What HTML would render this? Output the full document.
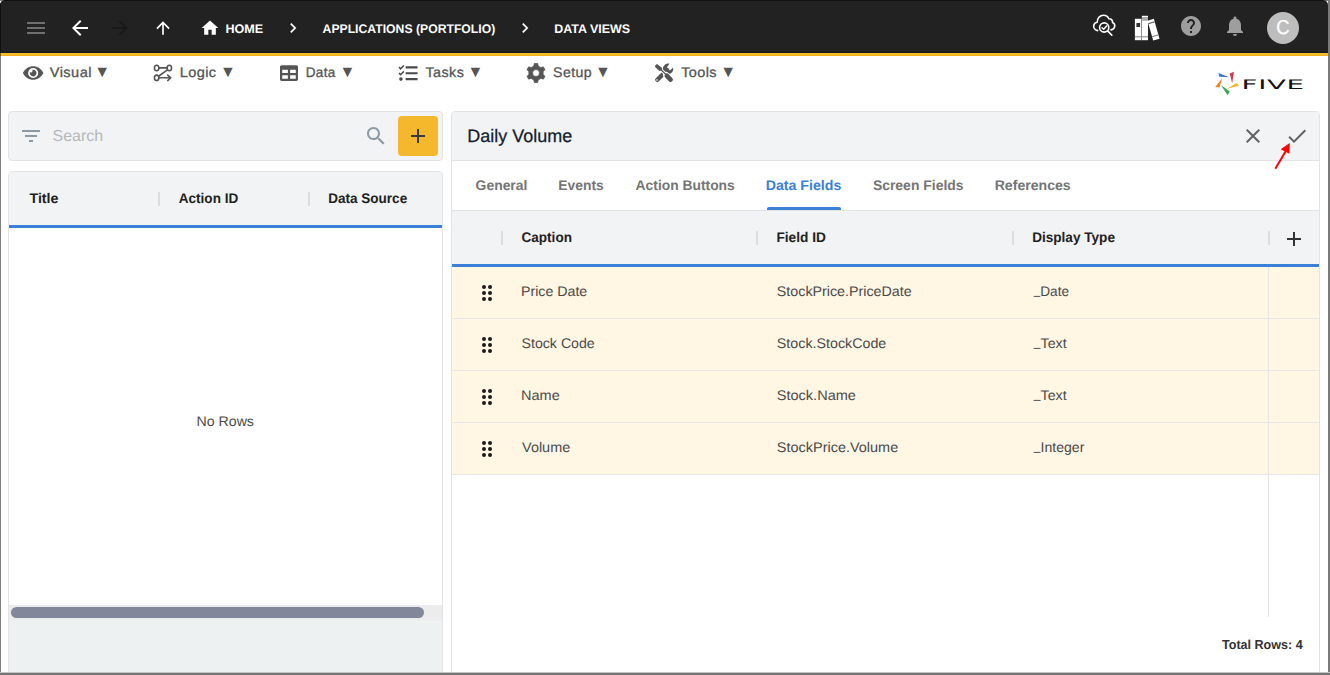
<!DOCTYPE html>
<html lang="en">
<head>
<meta charset="utf-8">
<title>Five - Data Views</title>
<style>
*{box-sizing:border-box;margin:0;padding:0}
html,body{width:1330px;height:675px;overflow:hidden;background:#fff}
body{font-family:"Liberation Sans",sans-serif;color:#212121;position:relative;text-rendering:geometricPrecision}
.abs{position:absolute}
.t{position:absolute;white-space:nowrap;line-height:1;transform-origin:0 0}
svg{position:absolute;display:block;overflow:visible}
#frame{position:absolute;left:0;top:0;width:1330px;height:675px;overflow:hidden;background:#fff}
#topbar{left:0;top:0;width:1328px;height:53px;background:#222;border-radius:5px 5px 0 0}
#topline{left:0;top:52px;width:1328px;height:4px;background:linear-gradient(#141822 0,#141822 1px,#ffc32d 1px,#ffc32d 2px,#f7b828 2px,#f7b828 3px,#f5b21b 3px)}
.crumb{color:#fff;font-weight:700;font-size:12.5px}
.menu{color:#555;font-size:14px;font-weight:400;letter-spacing:.4px;-webkit-text-stroke:.3px #555}
.tri{color:#555;font-size:16px}
.panel{background:#f2f3f5;border:1px solid #e2e3e5}
.th{font-weight:700;font-size:14px;color:#212121}
.sep{position:absolute;width:2px;height:14px;background:#dcdddf}
.blue{position:absolute;height:3px;background:#3a80d7}
.row{position:absolute;left:452px;width:867px;height:52px;background:#fff6e4;border-bottom:1px solid #e6e6e6}
.td{font-size:14px;color:#4a4a4a}
.us{display:inline-block;position:relative;top:-1.900px;width:6.700px;transform:scaleX(.84);transform-origin:0 0}
.tab{font-size:14px;font-weight:700;color:#757575}
/*FIT*/
#c1{transform:translateX(-0.56px) scaleX(1.0069)}
#c2{transform:translateX(-0.44px) scaleX(0.9767)}
#c3{transform:translateX(-0.75px) scaleX(0.9960)}
#m1{transform:translateX(-0.20px) scaleX(1.0436)}
#m2{transform:translateX(-1.34px) scaleX(1.0400)}
#m3{transform:translateX(-1.37px) scaleX(0.9667)}
#m4{transform:translateX(-0.46px) scaleX(1.0231)}
#m5{transform:translateX(-0.90px) scaleX(1.0094)}
#m6{transform:translateX(0.14px) scaleX(1.0311)}
#srch{transform:translateX(-0.45px) scaleX(0.9980)}
#h1{transform:translateX(0.45px) scaleX(1.0162)}
#h2{transform:translateX(-0.18px) scaleX(0.9660)}
#h3{transform:translateX(-0.66px) scaleX(0.9645)}
#norows{transform:translateX(-2.61px) scaleX(1.0109)}
#ttl{transform:translateX(-0.75px) scaleX(0.9995)}
#tb1{transform:translateX(-0.40px) scaleX(0.9931)}
#tb2{transform:translateX(-0.79px) scaleX(0.9921)}
#tb3{transform:translateX(-0.39px) scaleX(0.9884)}
#tb4{transform:translateX(-1.31px) scaleX(1.0123)}
#tb5{transform:translateX(-0.10px) scaleX(0.9956)}
#tb6{transform:translateX(-0.31px) scaleX(1.0068)}
#g1{transform:translateX(-0.48px) scaleX(0.9675)}
#g2{transform:translateX(-0.58px) scaleX(0.9776)}
#g3{transform:translateX(-0.87px) scaleX(0.9707)}
#r1a{transform:translateX(-0.97px) scaleX(1.0126)}
#r2a{transform:translateX(-0.46px) scaleX(1.0113)}
#r3a{transform:translateX(-1.00px) scaleX(1.0366)}
#r4a{transform:translateX(0.04px) scaleX(1.0317)}
#r1b{transform:translateX(-0.16px) scaleX(1.0191)}
#r2b{transform:translateX(-0.16px) scaleX(1.0189)}
#r3b{transform:translateX(-0.18px) scaleX(1.0368)}
#r4b{transform:translateX(-0.17px) scaleX(1.0328)}
#r1c{transform:translateX(0.74px) scaleX(0.9722)}
#r2c{transform:translateX(0.75px) scaleX(1.0185)}
#r3c{transform:translateX(0.75px) scaleX(1.0185)}
#r4c{transform:translateX(0.75px) scaleX(1.0070)}
#tot{transform:translateX(6.51px) scaleX(0.9665)}
#five{transform:translateX(-2.43px) scaleX(2.1018)}
/*ENDFIT*/
</style>
</head>
<body>
<div id="frame">
  <!-- top bar -->
  <div class="abs" style="left:0;top:0;width:1330px;height:1px;background:#7a7a7a"></div>
  <div class="abs" id="topbar"></div>
  <div class="abs" style="left:4px;top:0;width:1319px;height:1px;background:#111"></div>
  <div class="abs" id="topline"></div>

  <!-- hamburger -->
  <svg style="left:24px;top:16px" width="24" height="24" viewBox="0 0 24 24"><path fill="#6f6f6f" d="M3 18h18v-2H3v2zm0-5h18v-2H3v2zm0-7v2h18V6H3z"/></svg>
  <!-- back -->
  <svg style="left:68px;top:16px" width="24" height="24" viewBox="0 0 24 24"><path fill="#fff" d="M20 11H7.83l5.59-5.59L12 4l-8 8 8 8 1.41-1.41L7.83 13H20v-2z"/></svg>
  <!-- forward (disabled) -->
  <svg style="left:108px;top:16px" width="24" height="24" viewBox="0 0 24 24"><path fill="#191919" d="M12 4l-1.41 1.41L16.17 11H4v2h12.17l-5.58 5.59L12 20l8-8z"/></svg>
  <!-- up -->
  <svg style="left:153px;top:18px" width="20" height="20" viewBox="0 0 24 24"><path fill="#fff" d="M4 12l1.41 1.41L11 7.83V20h2V7.83l5.58 5.59L20 12l-8-8-8 8z"/></svg>
  <!-- home -->
  <svg style="left:200px;top:18px" width="20" height="20" viewBox="0 0 24 24"><path fill="#fff" d="M10 20v-6h4v6h5v-8h3L12 3 2 12h3v8z"/></svg>
  <div class="t crumb" id="c1" style="left:226px;top:22.600px">HOME</div>
  <svg style="left:283px;top:18px" width="20" height="20" viewBox="0 0 24 24"><path fill="#fff" d="M10 6L8.59 7.41 13.17 12l-4.58 4.59L10 18l6-6z"/></svg>
  <div class="t crumb" id="c2" style="left:323px;top:22.600px">APPLICATIONS (PORTFOLIO)</div>
  <svg style="left:515px;top:18px" width="20" height="20" viewBox="0 0 24 24"><path fill="#fff" d="M10 6L8.59 7.41 13.17 12l-4.58 4.59L10 18l6-6z"/></svg>
  <div class="t crumb" id="c3" style="left:555px;top:22.600px">DATA VIEWS</div>

  <!-- right icons -->
  <svg id="cloud" style="left:1091px;top:12px" width="26" height="26" viewBox="0 0 26 26" fill="none" stroke="#fff" stroke-width="1.6" stroke-linecap="round" stroke-linejoin="round">
    <path d="M6.6 18.6C3.6 18 2.4 15.600 2.700 13.700C3 11.800 4.400 10.500 6.200 10.300C6.200 6.500 8.800 3.200 12.400 3.200C15 3.200 17 4.500 17.800 6.800C20.400 6.600 21.800 8.600 21.600 10.600C23.400 11.400 24 13.200 23.600 14.900C23.200 16.500 21.900 17.600 20 17.900"/>
    <circle cx="13.200" cy="15.500" r="4.600"/>
    <path d="M16.600 18.900L20.800 23.100"/>
    <path d="M11 15.700L12.700 17.300L15.600 13.900" stroke-width="1.500"/>
  </svg>
  <svg id="books" style="left:1134px;top:15px" width="26" height="26" viewBox="0 0 26 26">
    <rect x="0.900" y="3.800" width="6.400" height="21.400" fill="#fff"/>
    <rect x="2.400" y="8" width="3.700" height="4" fill="#333"/>
    <rect x="0.900" y="20.900" width="6.400" height="1.600" fill="#aaa"/>
    <rect x="7.900" y="0.800" width="6.100" height="24.400" fill="#fff"/>
    <rect x="7.900" y="2" width="6.100" height="3.800" fill="#aaa"/>
    <rect x="7.900" y="20.900" width="6.100" height="1.600" fill="#aaa"/>
    <rect x="7.300" y="3.800" width="0.700" height="21.400" fill="#999"/>
    <g transform="rotate(-16 19.500 15)">
      <rect x="16.300" y="4.400" width="6.600" height="20.600" fill="#fff"/>
      <rect x="16.300" y="7" width="6.600" height="1" fill="#555"/>
      <rect x="16.300" y="20.500" width="6.600" height="1.200" fill="#888"/>
    </g>
  </svg>
  <!-- help -->
  <svg style="left:1179px;top:14px" width="24" height="24" viewBox="0 0 24 24"><path fill="#9e9e9e" d="M12 2C6.480 2 2 6.480 2 12s4.480 10 10 10 10-4.480 10-10S17.520 2 12 2zm1 17h-2v-2h2v2zm2.070-7.750l-.9.920C13.450 12.900 13 13.500 13 15h-2v-.5c0-1.100.45-2.100 1.170-2.830l1.240-1.260c.37-.36.590-.86.590-1.410 0-1.100-.9-2-2-2s-2 .9-2 2H8c0-2.210 1.790-4 4-4s4 1.790 4 4c0 .88-.36 1.680-.93 2.250z"/></svg>
  <!-- bell -->
  <svg style="left:1223px;top:14px" width="24" height="24" viewBox="0 0 24 24"><path fill="#9e9e9e" d="M12 22c1.100 0 2-.9 2-2h-4c0 1.100.89 2 2 2zm6-6v-5c0-3.070-1.640-5.640-4.500-6.320V4c0-.83-.67-1.500-1.500-1.500s-1.500.67-1.500 1.500v.68C7.630 5.360 6 7.920 6 11v5l-2 2v1h16v-1l-2-2z"/></svg>
  <!-- avatar -->
  <div class="abs" style="left:1267px;top:12px;width:32px;height:32px;border-radius:50%;background:#bdbdbd"></div>
  <div class="t" id="avc" style="left:1267px;top:18.200px;width:32px;text-align:center;color:#fff;font-size:20px;transform-origin:50% 50%;transform:scaleX(.92);-webkit-text-stroke:.3px #fff">C</div>

  <!-- menu row -->
  <div class="t menu" id="m1" style="left:50px;top:65px">Visual</div><div class="t tri" id="t1" style="left:94.3px;top:64.500px">▼</div>
  <div class="t menu" id="m2" style="left:181px;top:65px">Logic</div><div class="t tri" id="t2" style="left:219.9px;top:64.500px">▼</div>
  <div class="t menu" id="m3" style="left:307px;top:65px">Data</div><div class="t tri" id="t3" style="left:339.6px;top:64.500px">▼</div>
  <div class="t menu" id="m4" style="left:426px;top:65px">Tasks</div><div class="t tri" id="t4" style="left:467.5px;top:64.500px">▼</div>
  <div class="t menu" id="m5" style="left:554px;top:65px">Setup</div><div class="t tri" id="t5" style="left:594.9px;top:64.500px">▼</div>
  <div class="t menu" id="m6" style="left:681px;top:65px">Tools</div><div class="t tri" id="t6" style="left:720.3px;top:64.500px">▼</div>


  <!-- menu icons -->
  <svg id="i-eye" style="left:22.800px;top:63.900px" width="20.300" height="18.040" viewBox="0 0 576 512"><path fill="#555" d="M572.520 241.400C518.290 135.590 410.930 64 288 64S57.680 135.640 3.480 241.410a32.350 32.350 0 0 0 0 29.190C57.710 376.410 165.070 448 288 448s230.320-71.640 284.520-177.410a32.350 32.350 0 0 0 0-29.190zM288 400a144 144 0 1 1 144-144 143.930 143.930 0 0 1-144 144zm0-240a95.310 95.310 0 0 0-25.310 3.790 47.850 47.850 0 0 1-66.900 66.900A95.780 95.780 0 1 0 288 160z"/></svg>
  <svg id="i-logic" style="left:145px;top:58px" width="40" height="30" viewBox="0 0 900 675" fill="none" stroke="#555" stroke-width="36" stroke-linecap="round" stroke-linejoin="round">
    <ellipse cx="262" cy="225" rx="50" ry="62"/><ellipse cx="548" cy="225" rx="50" ry="62"/><ellipse cx="262" cy="447" rx="50" ry="62"/>
    <path d="M318 222H492M505 268L312 405M318 445H575M512 385L580 445L512 508"/>
  </svg>
  <svg id="i-table" style="left:280px;top:63.800px" width="18" height="18" viewBox="0 0 512 512"><path fill="#555" d="M464 32H48C21.490 32 0 53.490 0 80v352c0 26.510 21.490 48 48 48h416c26.510 0 48-21.490 48-48V80c0-26.510-21.490-48-48-48zM224 416H64v-96h160v96zm0-160H64v-96h160v96zm224 160H288v-96h160v96zm0-160H288v-96h160v96z"/></svg>
  <svg id="i-tasks" style="left:390px;top:58px" width="40" height="30" viewBox="0 0 900 675" fill="none" stroke="#4a4a4a" stroke-linecap="butt" stroke-linejoin="miter">
    <path d="M352 211H620M352 343H620M352 475H620" stroke-width="48"/>
    <path d="M203 205L238 243L312 168M203 338L238 376L312 301" stroke-width="34"/>
    <circle cx="246" cy="475" r="40" fill="#4a4a4a" stroke="none"/>
  </svg>
  <svg id="i-cog" style="left:526px;top:63px" width="20" height="20" viewBox="-10 -10 20 20"><path fill="#555" stroke="#555" stroke-width="0.800" stroke-linejoin="round" fill-rule="evenodd" d="M2.160 -6.970 L1.670 -9.460 L-1.670 -9.460 L-2.160 -6.970 L-4.960 -5.360 L-7.310 -6.130 L-8.990 -3.330 L-7.120 -1.620 L-7.120 1.620 L-8.990 3.330 L-7.310 6.130 L-4.960 5.360 L-2.160 6.970 L-1.670 9.460 L1.670 9.460 L2.160 6.970 L4.960 5.360 L7.310 6.130 L8.990 3.330 L7.120 1.620 L7.120 -1.620 L8.990 -3.330 L7.310 -6.130 L4.960 -5.360Z M3.500 0 A3.500 3.500 0 1 0 -3.500 0 A3.500 3.500 0 1 0 3.500 0Z"/></svg>
  <svg id="i-tools" style="left:644px;top:58px" width="40" height="30" viewBox="0 0 900 675">
    <path d="M575 132A118 118 0 1 0 655 215L590 275L528 262L518 200Z" fill="#555"/>
    <path d="M300 490L520 272" stroke="#555" stroke-width="100" stroke-linecap="round" fill="none"/>
    <g fill="none" stroke="#fff">
      <path d="M340 225L500 380" stroke-width="72"/>
      <path d="M500 385L598 485" stroke-width="140" stroke-linecap="round"/>
    </g>
    <path d="M250 168L292 135L402 218L408 268L345 292L252 200Z" fill="#555"/>
    <g fill="none" stroke="#555" stroke-linecap="round">
      <path d="M372 255L500 380" stroke-width="30"/>
      <path d="M515 400L598 485" stroke-width="104"/>
    </g>
    <circle cx="292" cy="495" r="20" fill="#c8c8c8"/>
  </svg>
  <!-- five logo -->
  <svg id="i-five" style="left:1200px;top:60px" width="120" height="45" viewBox="0 0 1330 499">
    <path d="M205 143L325 190L213 186Z" fill="#3b78d8"/>
    <path d="M376 130L356 258L330 150Z" fill="#dc3545"/>
    <path d="M402 254L432 285L303 320Z" fill="#f5b72b"/>
    <path d="M234 280L330 350L305 392Z" fill="#34a853"/>
    <path d="M246 203L216 306L168 300Z" fill="#f5822a"/>
  </svg>
  <div class="t" id="five" style="left:1244px;top:79.400px;font-family:'DejaVu Sans',sans-serif;font-weight:400;font-size:13.200px;color:#111;letter-spacing:.3px">FIVE</div>

  <!-- left search -->
  <div class="abs panel" style="left:8px;top:111px;width:435px;height:50px;border-radius:4px"></div>
  <svg style="left:19px;top:124px" width="24" height="24" viewBox="0 0 24 24"><path fill="#8d99a3" d="M10 18h4v-2h-4v2zM3 6v2h18V6H3zm3 7h12v-2H6v2z"/></svg>
  <div class="t" id="srch" style="left:53px;top:128.600px;font-size:16px;color:#b4b8bc">Search</div>
  <svg style="left:363.800px;top:124px" width="24" height="24" viewBox="0 0 24 24"><path fill="#8d99a3" d="M15.500 14h-.79l-.28-.27C15.410 12.590 16 11.110 16 9.500 16 5.910 13.090 3 9.500 3S3 5.910 3 9.500 5.910 16 9.500 16c1.610 0 3.090-.59 4.230-1.570l.27.280v.79l5 4.990L20.490 19l-4.990-5zm-6 0C7.010 14 5 11.990 5 9.500S7.010 5 9.500 5 14 7.010 14 9.500 11.990 14 9.500 14z"/></svg>
  <div class="abs" style="left:398px;top:116px;width:40px;height:40px;border-radius:4px;background:#f5b72b"></div>
  <svg style="left:406px;top:124px" width="24" height="24" viewBox="0 0 24 24"><path fill="#3a3a3a" d="M19 13h-6v6h-2v-6H5v-2h6V5h2v6h6v2z"/></svg>

  <!-- left table -->
  <div class="abs" style="left:8px;top:171px;width:435px;height:510px;border:1px solid #e2e3e5;border-radius:4px;background:#fff;overflow:hidden">
    <div class="abs" style="left:0;top:0;width:433px;height:54px;background:#f2f3f5"></div>
    <div class="abs" style="left:0;top:433px;width:433px;height:15px;background:#ececec"></div>
    <div class="abs" style="left:0;top:448px;width:433px;height:60px;background:#eef1f2"></div>
    <div class="abs" style="left:2px;top:435px;width:413px;height:11px;border-radius:5.500px;background:#828899"></div>
  </div>
  <div class="blue" style="left:9px;top:225px;width:433px"></div>
  <div class="t th" id="h1" style="left:29px;top:191px">Title</div>
  <div class="sep" style="left:158px;top:192px"></div>
  <div class="t th" id="h2" style="left:179px;top:191px">Action ID</div>
  <div class="sep" style="left:308px;top:192px"></div>
  <div class="t th" id="h3" style="left:329px;top:191px">Data Source</div>
  <div class="t" id="norows" style="left:9px;top:414px;width:433px;text-align:center;font-size:14px;color:#4a4a4a">No Rows</div>

  <!-- right panel -->
  <div class="abs" style="left:451px;top:111px;width:869px;height:570px;border:1px solid #e2e3e5;border-radius:4px;background:#fff;overflow:hidden">
    <div class="abs" style="left:0;top:0;width:867px;height:49px;background:#f2f3f5;border-bottom:1px solid #e2e3e5"></div>
    <div class="abs" style="left:0;top:98px;width:867px;height:55px;background:#f2f3f5;border-top:1px solid #e2e3e5"></div>
  </div>
  <div class="t" id="ttl" style="left:468px;top:127px;font-size:18px;color:#141c30;-webkit-text-stroke:.25px #141c30">Daily Volume</div>
  <svg style="left:1241px;top:124px" width="24" height="24" viewBox="0 0 24 24"><path fill="#626262" d="M19 6.410L17.590 5 12 10.590 6.410 5 5 6.410 10.590 12 5 17.590 6.410 19 12 13.410 17.590 19 19 17.590 13.410 12z"/></svg>
  <svg style="left:1285px;top:123.500px" width="24" height="24" viewBox="0 0 24 24"><path fill="#626262" d="M9 16.170L4.830 12l-1.420 1.410L9 19 21 7l-1.410-1.410z"/></svg>
  <!-- red arrow -->
  <svg id="i-arrow" style="left:1230px;top:115px" width="95" height="60" viewBox="0 0 1069 675"><path d="M510 605L630 402" stroke="#f00" stroke-width="22" fill="none"/><path d="M673 316L570 384L668 437Z" fill="#f00"/></svg>

  <!-- tabs -->
  <div class="t tab" id="tb1" style="left:476px;top:178.200px">General</div>
  <div class="t tab" id="tb2" style="left:559px;top:178.200px">Events</div>
  <div class="t tab" id="tb3" style="left:636px;top:178.200px">Action Buttons</div>
  <div class="t tab" id="tb4" style="left:767px;top:178.200px;color:#3a80d7">Data Fields</div>
  <div class="t tab" id="tb5" style="left:873px;top:178.200px">Screen Fields</div>
  <div class="t tab" id="tb6" style="left:995px;top:178.200px">References</div>
  <div class="abs" style="left:767px;top:207px;width:74px;height:3px;background:#3a80d7;border-radius:2px 2px 0 0"></div>

  <!-- right table header -->
  <div class="sep" style="left:501px;top:231px"></div>
  <div class="t th" id="g1" style="left:522px;top:230px">Caption</div>
  <div class="sep" style="left:756px;top:231px"></div>
  <div class="t th" id="g2" style="left:777px;top:230px">Field ID</div>
  <div class="sep" style="left:1012px;top:231px"></div>
  <div class="t th" id="g3" style="left:1033px;top:230px">Display Type</div>
  <div class="sep" style="left:1268px;top:231px"></div>
  <svg style="left:1282px;top:227px" width="24" height="24" viewBox="0 0 24 24"><path fill="#333" d="M19 13h-6v6h-2v-6H5v-2h6V5h2v6h6v2z"/></svg>
  <div class="blue" style="left:452px;top:264px;width:867px"></div>

  <!-- rows -->
  <div class="row" style="top:267px"></div>
  <div class="row" style="top:319px"></div>
  <div class="row" style="top:371px"></div>
  <div class="row" style="top:423px"></div>
  <div class="abs" style="left:1268px;top:267px;width:1px;height:350px;background:#e6e6e6"></div>

  <svg style="left:475px;top:281px" width="24" height="24" viewBox="0 0 24 24"><g fill="#1c1c1c"><circle cx="9" cy="6" r="2"/><circle cx="15" cy="6" r="2"/><circle cx="9" cy="12" r="2"/><circle cx="15" cy="12" r="2"/><circle cx="9" cy="18" r="2"/><circle cx="15" cy="18" r="2"/></g></svg>
  <svg style="left:475px;top:333px" width="24" height="24" viewBox="0 0 24 24"><g fill="#1c1c1c"><circle cx="9" cy="6" r="2"/><circle cx="15" cy="6" r="2"/><circle cx="9" cy="12" r="2"/><circle cx="15" cy="12" r="2"/><circle cx="9" cy="18" r="2"/><circle cx="15" cy="18" r="2"/></g></svg>
  <svg style="left:475px;top:385px" width="24" height="24" viewBox="0 0 24 24"><g fill="#1c1c1c"><circle cx="9" cy="6" r="2"/><circle cx="15" cy="6" r="2"/><circle cx="9" cy="12" r="2"/><circle cx="15" cy="12" r="2"/><circle cx="9" cy="18" r="2"/><circle cx="15" cy="18" r="2"/></g></svg>
  <svg style="left:475px;top:437px" width="24" height="24" viewBox="0 0 24 24"><g fill="#1c1c1c"><circle cx="9" cy="6" r="2"/><circle cx="15" cy="6" r="2"/><circle cx="9" cy="12" r="2"/><circle cx="15" cy="12" r="2"/><circle cx="9" cy="18" r="2"/><circle cx="15" cy="18" r="2"/></g></svg>
  <div class="t td" id="r1a" style="left:522px;top:284px">Price Date</div>
  <div class="t td" id="r1b" style="left:777px;top:284px">StockPrice.PriceDate</div>
  <div class="t td" id="r1c" style="left:1033px;top:284px"><span class="us">_</span>Date</div>
  <div class="t td" id="r2a" style="left:522px;top:336px">Stock Code</div>
  <div class="t td" id="r2b" style="left:777px;top:336px">Stock.StockCode</div>
  <div class="t td" id="r2c" style="left:1033px;top:336px"><span class="us">_</span>Text</div>
  <div class="t td" id="r3a" style="left:522px;top:388px">Name</div>
  <div class="t td" id="r3b" style="left:777px;top:388px">Stock.Name</div>
  <div class="t td" id="r3c" style="left:1033px;top:388px"><span class="us">_</span>Text</div>
  <div class="t td" id="r4a" style="left:522px;top:440px">Volume</div>
  <div class="t td" id="r4b" style="left:777px;top:440px">StockPrice.Volume</div>
  <div class="t td" id="r4c" style="left:1033px;top:440px"><span class="us">_</span>Integer</div>

  <div class="t" id="tot" style="left:1100px;width:203px;text-align:right;top:638px;font-size:13px;font-weight:700;color:#333">Total Rows: 4</div>

  <!-- window frame -->
  <div class="abs" style="left:0;top:3px;width:1px;height:672px;background:rgba(0,0,0,.5)"></div>
  <div class="abs" style="left:1328px;top:0;width:2px;height:675px;background:#7a7a7a"></div>
  <div class="abs" style="left:0;top:672px;width:1330px;height:1px;background:#c4c4c4"></div>
  <div class="abs" style="left:0;top:673px;width:1330px;height:2px;background:#767676"></div>
</div>
</body>
</html>
